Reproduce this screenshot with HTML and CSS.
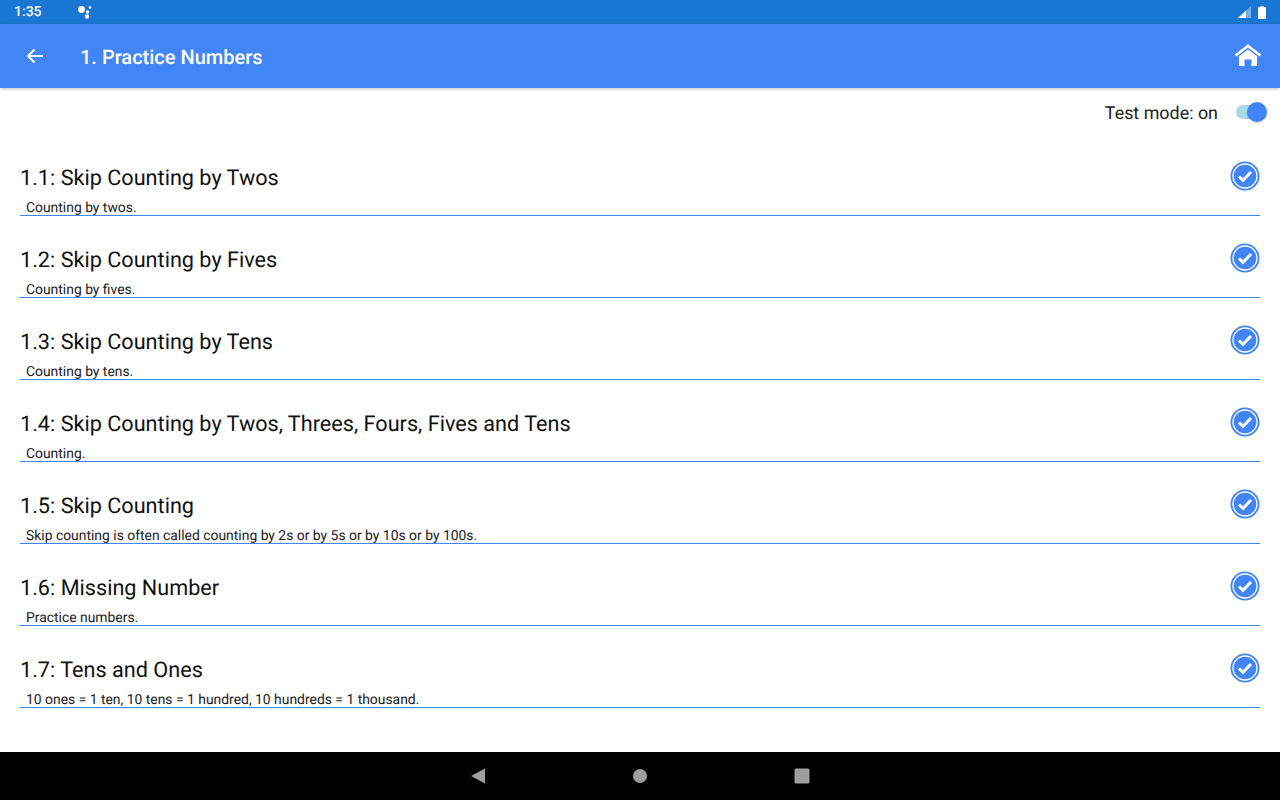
FILE: index.html
```html
<!DOCTYPE html>
<html lang="en">
<head>
    <meta charset="UTF-8">
    <meta name="viewport" content="width=device-width, initial-scale=1.0">
    <title>1. Practice Numbers</title>
    <link rel="stylesheet" href="styles.css">
</head>
<body>
    <div class="screen">
        <!-- Status bar -->
        <div class="status-bar">
            <div class="status-left">
                <span class="clock">1:35</span>
                <svg class="assistant" width="16" height="14" viewBox="0 0 16 14"><circle cx="4.5" cy="4.5" r="3.4" fill="#fff"/><circle cx="10.5" cy="7" r="1.8" fill="#fff"/><circle cx="10" cy="11.5" r="2.2" fill="#fff"/><circle cx="13" cy="2.5" r="1.3" fill="#fff"/></svg>
            </div>
            <div class="status-right">
                <svg width="13" height="12" viewBox="0 0 13 12"><path d="M0 12 L13 0 V12 Z" fill="#fff" opacity="0.4"/><path d="M0 12 L8 4.6 V12 Z" fill="#fff"/></svg>
                <svg width="8" height="13" viewBox="0 0 8 13"><path d="M2.5 0 H5.5 V1.2 H8 V13 H0 V1.2 H2.5 Z" fill="#fff"/></svg>
            </div>
        </div>

        <!-- App bar -->
        <div class="app-bar">
            <svg class="back-icon" width="18" height="16" viewBox="0 0 18 16"><path d="M17 8 H2 M8.5 1.5 L2 8 L8.5 14.5" fill="none" stroke="#fff" stroke-width="1.9"/></svg>
            <div class="app-title">1. Practice Numbers</div>
            <svg class="home-icon" width="28" height="24" viewBox="0 0 28 24"><path d="M1.5 11.5 L14 2 L26.5 11.5" fill="none" stroke="#fff" stroke-width="2.6"/><path d="M5 12 L14 5.4 L23 12 V22 H17.5 V15.5 H10.5 V22 H5 Z" fill="#fff"/></svg>
        </div>

        <!-- Test mode toggle -->
        <div class="mode-row">
            <span class="mode-label">Test mode: on</span>
            <div class="toggle"><div class="toggle-track"></div><div class="toggle-thumb"></div></div>
        </div>

        <!-- Lesson list -->
        <div class="list" id="lessonList">
            <div class="list-item">
                <div class="item-text">
                    <div class="item-title">1.1: Skip Counting by Twos</div>
                    <div class="item-sub">Counting by twos.</div>
                </div>
                <svg class="check" width="30" height="30" viewBox="0 0 30 30"><circle cx="15" cy="15" r="14.5" fill="#4285f4"/><circle cx="15" cy="15" r="12" fill="none" stroke="#fff" stroke-width="1.3"/><path d="M9 15.5 L13 19.4 L21 11" fill="none" stroke="#fff" stroke-width="3"/></svg>
            </div>
            <div class="list-item">
                <div class="item-text">
                    <div class="item-title">1.2: Skip Counting by Fives</div>
                    <div class="item-sub">Counting by fives.</div>
                </div>
                <svg class="check" width="30" height="30" viewBox="0 0 30 30"><circle cx="15" cy="15" r="14.5" fill="#4285f4"/><circle cx="15" cy="15" r="12" fill="none" stroke="#fff" stroke-width="1.3"/><path d="M9 15.5 L13 19.4 L21 11" fill="none" stroke="#fff" stroke-width="3"/></svg>
            </div>
            <div class="list-item">
                <div class="item-text">
                    <div class="item-title">1.3: Skip Counting by Tens</div>
                    <div class="item-sub">Counting by tens.</div>
                </div>
                <svg class="check" width="30" height="30" viewBox="0 0 30 30"><circle cx="15" cy="15" r="14.5" fill="#4285f4"/><circle cx="15" cy="15" r="12" fill="none" stroke="#fff" stroke-width="1.3"/><path d="M9 15.5 L13 19.4 L21 11" fill="none" stroke="#fff" stroke-width="3"/></svg>
            </div>
            <div class="list-item">
                <div class="item-text">
                    <div class="item-title">1.4: Skip Counting by Twos, Threes, Fours, Fives and Tens</div>
                    <div class="item-sub">Counting.</div>
                </div>
                <svg class="check" width="30" height="30" viewBox="0 0 30 30"><circle cx="15" cy="15" r="14.5" fill="#4285f4"/><circle cx="15" cy="15" r="12" fill="none" stroke="#fff" stroke-width="1.3"/><path d="M9 15.5 L13 19.4 L21 11" fill="none" stroke="#fff" stroke-width="3"/></svg>
            </div>
            <div class="list-item">
                <div class="item-text">
                    <div class="item-title">1.5: Skip Counting</div>
                    <div class="item-sub">Skip counting is often called counting by 2s or by 5s or by 10s or by 100s.</div>
                </div>
                <svg class="check" width="30" height="30" viewBox="0 0 30 30"><circle cx="15" cy="15" r="14.5" fill="#4285f4"/><circle cx="15" cy="15" r="12" fill="none" stroke="#fff" stroke-width="1.3"/><path d="M9 15.5 L13 19.4 L21 11" fill="none" stroke="#fff" stroke-width="3"/></svg>
            </div>
            <div class="list-item">
                <div class="item-text">
                    <div class="item-title">1.6: Missing Number</div>
                    <div class="item-sub">Practice numbers.</div>
                </div>
                <svg class="check" width="30" height="30" viewBox="0 0 30 30"><circle cx="15" cy="15" r="14.5" fill="#4285f4"/><circle cx="15" cy="15" r="12" fill="none" stroke="#fff" stroke-width="1.3"/><path d="M9 15.5 L13 19.4 L21 11" fill="none" stroke="#fff" stroke-width="3"/></svg>
            </div>
            <div class="list-item">
                <div class="item-text">
                    <div class="item-title">1.7: Tens and Ones</div>
                    <div class="item-sub">10 ones = 1 ten, 10 tens = 1 hundred, 10 hundreds = 1 thousand.</div>
                </div>
                <svg class="check" width="30" height="30" viewBox="0 0 30 30"><circle cx="15" cy="15" r="14.5" fill="#4285f4"/><circle cx="15" cy="15" r="12" fill="none" stroke="#fff" stroke-width="1.3"/><path d="M9 15.5 L13 19.4 L21 11" fill="none" stroke="#fff" stroke-width="3"/></svg>
            </div>
        </div>

        <!-- Navigation bar -->
        <div class="nav-bar">
            <svg class="nav-back" width="16" height="16" viewBox="0 0 16 16"><path d="M15 0.5 V15.5 L1 8 Z" fill="#9e9e9e"/></svg>
            <svg width="14" height="14" viewBox="0 0 14 14"><circle cx="7" cy="7" r="7" fill="#9e9e9e"/></svg>
            <svg width="16" height="16" viewBox="0 0 16 16"><rect x="0.5" y="0.5" width="15" height="15" rx="1.5" fill="#9e9e9e"/></svg>
        </div>
    </div>
</body>
</html>
```

FILE: styles.css
```css
html, body {
    margin: 0;
    padding: 0;
}

body {
    font-family: Roboto, "Liberation Sans", sans-serif;
    background-color: #fff;
    text-rendering: geometricPrecision;
}

.screen {
    width: 1280px;
    height: 800px;
    display: flex;
    flex-direction: column;
    overflow: hidden;
}

/* Status bar */
.status-bar {
    height: 24px;
    background: #1976d2;
    color: #fff;
    display: flex;
    justify-content: space-between;
    align-items: center;
    padding: 0 14px;
    flex-shrink: 0;
}

.status-left {
    display: flex;
    align-items: center;
}

.clock {
    font-size: 14px;
    font-weight: 500;
    width: 63px;
}

.status-right {
    display: flex;
    align-items: center;
    gap: 7px;
}

/* App bar */
.app-bar {
    height: 64px;
    background: #4285f4;
    display: flex;
    align-items: center;
    padding: 0 18px 0 26px;
    box-shadow: 0 1px 3px rgba(0, 0, 0, 0.25);
    position: relative;
    flex-shrink: 0;
}

.back-icon {
    margin-right: 36px;
    margin-top: -1px;
}

.app-title {
    color: #fff;
    font-size: 20px;
    line-height: 24px;
    font-weight: 500;
    flex: 1;
    margin-top: 2px;
}

/* Test mode */
.mode-row {
    height: 48px;
    display: flex;
    justify-content: flex-end;
    align-items: center;
    padding-right: 13px;
    flex-shrink: 0;
}

.mode-label {
    font-size: 17.9px;
    color: #212121;
    margin-right: 17px;
    padding-top: 2px;
}

.toggle {
    width: 32px;
    height: 22px;
    position: relative;
}

.toggle-track {
    position: absolute;
    left: 1px;
    top: 4px;
    width: 28px;
    height: 14px;
    border-radius: 7px;
    background: #add8e6;
}

.toggle-thumb {
    position: absolute;
    right: 0;
    top: 1px;
    width: 20px;
    height: 20px;
    border-radius: 50%;
    background: #4285f4;
    box-shadow: 0 1px 2px rgba(0, 0, 0, 0.2);
}

/* Lesson list */
.list {
    flex: 1;
    padding: 0 20px;
}

.list-item {
    height: 82px;
    box-sizing: border-box;
    border-bottom: 1px solid #4285f4;
    display: flex;
    justify-content: space-between;
}

.list-item:first-child {
    height: 80px;
}

.item-text {
    display: flex;
    flex-direction: column;
    justify-content: flex-end;
}

.item-title {
    font-size: 21.65px;
    line-height: 28px;
    color: #111;
}

.item-sub {
    font-size: 13.9px;
    line-height: 16px;
    color: #212121;
    padding: 6px 0 0 6px;
    position: relative;
    top: 1px;
}

.check {
    align-self: flex-end;
    margin-bottom: 24px;
}

/* Navigation bar */
.nav-bar {
    height: 48px;
    background: #000;
    display: flex;
    justify-content: center;
    align-items: center;
    gap: 147px;
    flex-shrink: 0;
}

.nav-back {
    margin-left: -1px;
}
```
